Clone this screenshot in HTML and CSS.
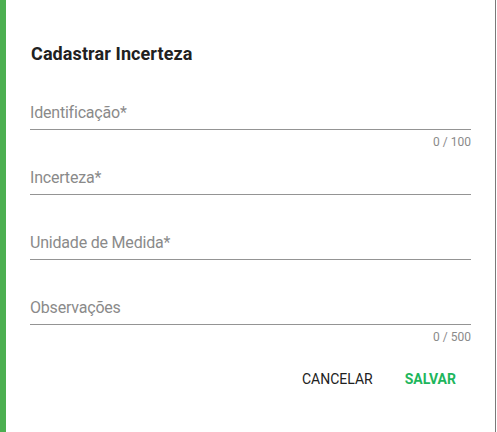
FILE: index.html
```
<!DOCTYPE html>
<html>
<head>
  <title>Cadastrar Incerteza</title>
  <meta name="viewport" content="width=device-width, initial-scale=1">
  <link rel="stylesheet" href="styles.css">
</head>
<body>
  <div class="frame">
    <div class="side-bar"></div>
    <div class="dialog">
      <h2 class="dialog-title">Cadastrar Incerteza</h2>

      <div class="field">
        <div class="field-input">Identificação*</div>
        <div class="field-hint">0 / 100</div>
      </div>
      <div class="field">
        <div class="field-input">Incerteza*</div>
        <div class="field-hint"></div>
      </div>
      <div class="field">
        <div class="field-input">Unidade de Medida*</div>
        <div class="field-hint"></div>
      </div>
      <div class="field">
        <div class="field-input">Observações</div>
        <div class="field-hint">0 / 500</div>
      </div>

      <div class="actions">
        <button class="btn">CANCELAR</button>
        <button class="btn btn-primary">SALVAR</button>
      </div>
    </div>
  </div>
</body>
</html>
```

FILE: styles.css
```
body {
  margin: 0;
  background-color: #fff;
  font-family: Roboto, "Liberation Sans", sans-serif;
}
/* Frame with the green stripe on the left */
.frame {
  display: flex;
  width: 496px;
  height: 432px;
}
.side-bar {
  width: 6px;
  background-color: #4caf50;
}
.dialog {
  flex: 1;
  padding: 42px 24px 0 24px;
  border-right: 1px solid #7a7a7a;
}
.dialog-title {
  margin: 0 0 35px 1px;
  font-size: 18px;
  line-height: 24px;
  font-weight: 700;
  letter-spacing: 0.1px;
  color: #212121;
}
/* Form fields */
.field-input {
  font-size: 16px;
  line-height: 24px;
  font-weight: 400;
  letter-spacing: -0.2px;
  color: #8a8a8a;
  padding-bottom: 4px;
  border-bottom: 1px solid #949494;
}
.field-hint {
  height: 36px;
  box-sizing: border-box;
  padding-top: 5px;
  font-size: 12px;
  line-height: 14px;
  text-align: right;
  color: #8a8a8a;
}
/* Buttons */
.actions {
  display: flex;
  justify-content: flex-end;
  margin-right: -1px;
}
.btn {
  height: 36px;
  padding: 0 16px;
  border: none;
  background: none;
  cursor: pointer;
  font-family: Roboto, "Liberation Sans", sans-serif;
  font-size: 14px;
  font-weight: 400;
  color: #212121;
}
.btn-primary {
  color: #1eb65c;
  font-weight: 700;
}
```
